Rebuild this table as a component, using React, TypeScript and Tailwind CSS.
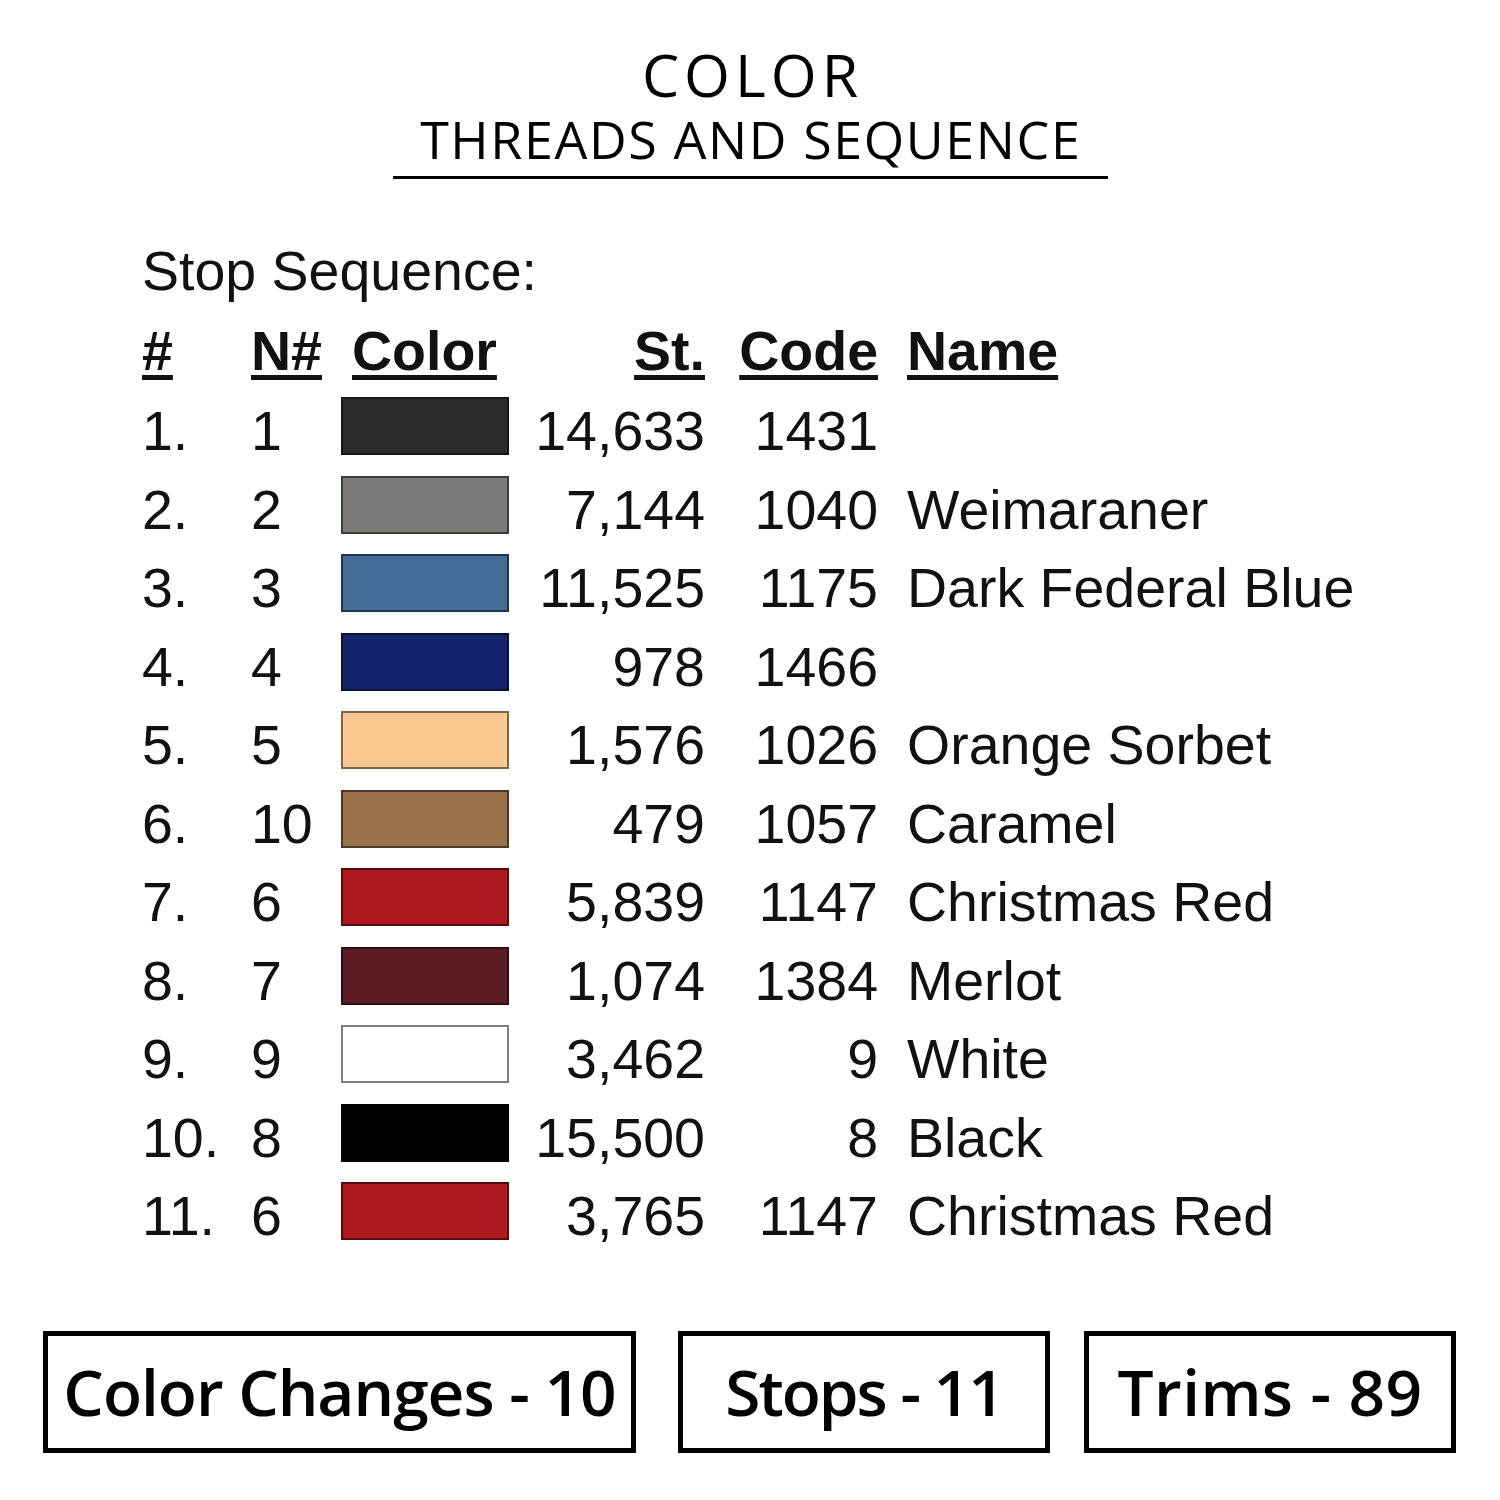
import React from "react";

const rows = [
  { n: "1.", nn: "1", color: "#2b2b2b", st: "14,633", code: "1431", name: "" },
  { n: "2.", nn: "2", color: "#7d7a78", st: "7,144", code: "1040", name: "Weimaraner" },
  { n: "3.", nn: "3", color: "#436c96", st: "11,525", code: "1175", name: "Dark Federal Blue" },
  { n: "4.", nn: "4", color: "#15246a", st: "978", code: "1466", name: "" },
  { n: "5.", nn: "5", color: "#fcc891", st: "1,576", code: "1026", name: "Orange Sorbet" },
  { n: "6.", nn: "10", color: "#98704a", st: "479", code: "1057", name: "Caramel" },
  { n: "7.", nn: "6", color: "#ad181f", st: "5,839", code: "1147", name: "Christmas Red" },
  { n: "8.", nn: "7", color: "#5a1b22", st: "1,074", code: "1384", name: "Merlot" },
  { n: "9.", nn: "9", color: "#ffffff", st: "3,462", code: "9", name: "White" },
  { n: "10.", nn: "8", color: "#000000", st: "15,500", code: "8", name: "Black" },
  { n: "11.", nn: "6", color: "#ad181f", st: "3,765", code: "1147", name: "Christmas Red" },
];

const arial = { fontFamily: '"Liberation Sans", Arial, sans-serif' };
const title = { fontFamily: '"Open Sans", sans-serif' };

export default function App() {
  return (
    <div className="w-[1500px] h-[1500px] bg-white text-[#111] flex flex-col overflow-hidden">
      <div className="flex flex-col items-center mt-[45px]" style={title}>
        <div className="text-[59px] leading-[59px] font-normal tracking-[5px] pl-[5px] text-black">COLOR</div>
        <div className="text-[52px] leading-[52px] font-normal mt-[9px] tracking-[1.6px] pl-[1.6px] text-black">THREADS AND SEQUENCE</div>
        <div className="w-[715px] h-[3px] bg-black mt-[11px]" />
      </div>

      <div className="pl-[142px] mt-[53px] text-[55.5px]" style={arial}>
        <div className="h-[80px] leading-[79px]">Stop Sequence:</div>
        <div className="h-[80px] leading-[79px] flex font-bold underline decoration-[5px] underline-offset-[5px]">
          <div className="w-[109px]">#</div>
          <div className="w-[90px]">N#</div>
          <div className="w-[168px] pl-[11px]">Color</div>
          <div className="w-[196px] text-right">St.</div>
          <div className="w-[173px] text-right">Code</div>
          <div className="pl-[29px]">Name</div>
        </div>
        {rows.map((r, i) => (
          <div key={i} className="h-[78.5px] leading-[79px] flex">
            <div className="w-[109px]">{r.n}</div>
            <div className="w-[90px]">{r.nn}</div>
            <div className="w-[168px]">
              <div
                className="w-[168px] h-[58px] mt-[5px] border-2 border-black/50"
                style={{ backgroundColor: r.color }}
              />
            </div>
            <div className="w-[196px] text-right">{r.st}</div>
            <div className="w-[173px] text-right">{r.code}</div>
            <div className="pl-[29px] whitespace-nowrap">{r.name}</div>
          </div>
        ))}
      </div>

      <div className="flex mt-[75px] pl-[43px] text-black" style={title}>
        <div className="w-[593px] h-[122px] border-[5px] border-black flex items-center justify-center text-[64px] font-semibold tracking-[-1px]">
          Color Changes - 10
        </div>
        <div className="w-[372px] h-[122px] ml-[42px] border-[5px] border-black flex items-center justify-center text-[64px] font-semibold tracking-[-2px]">
          Stops - 11
        </div>
        <div className="w-[372px] h-[122px] ml-[34px] border-[5px] border-black flex items-center justify-center text-[64px] font-semibold tracking-[0.4px]">
          Trims - 89
        </div>
      </div>
    </div>
  );
}
